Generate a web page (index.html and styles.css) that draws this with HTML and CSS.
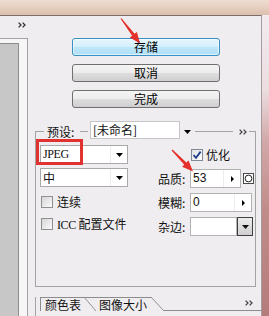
FILE: index.html
```html
<!DOCTYPE html>
<html lang="zh">
<head>
<meta charset="utf-8">
<title>存储为 Web 所用格式</title>
<link rel="stylesheet" href="styles.css">
</head>
<body>
<div class="page">
  <div class="topband"></div>
  <div class="stage">
    <div class="dialog">
      <div class="side">
        <svg class="chev" width="8" height="6" viewBox="0 0 8 6"><path d="M0.6 0.6 L3 3 L0.6 5.4 M4.6 0.6 L7 3 L4.6 5.4" fill="none" stroke="#333" stroke-width="1.3"/></svg>
        <div class="preview"><div class="preview-inner"></div></div>
      </div>
      <div class="main">
        <div class="buttons">
          <button class="btn btn-focus">存储</button>
          <button class="btn">取消</button>
          <button class="btn">完成</button>
        </div>
        <div class="group">
          <div class="legend">
            <span class="seg seg1"></span>
            <span class="legend-label">预设:</span>
            <span class="seg seg2"></span>
            <div class="preset">[未命名]</div>
            <svg class="tri preset-arrow" width="7" height="4" viewBox="0 0 7 4"><polygon points="0,0 7,0 3.5,4" fill="#000"/></svg>
            <span class="seg seg3"></span>
            <svg class="chev" width="8" height="6" viewBox="0 0 8 6"><path d="M0.6 0.6 L3 3 L0.6 5.4 M4.6 0.6 L7 3 L4.6 5.4" fill="none" stroke="#444" stroke-width="1.3"/></svg>
            <span class="seg seg4"></span>
          </div>
          <div class="cols">
            <div class="colL">
              <div class="combo"><span class="val latin">JPEG</span><span class="combo-btn"><svg width="7" height="4" viewBox="0 0 7 4"><polygon points="0,0 7,0 3.5,4" fill="#000"/></svg></span></div>
              <div class="combo combo2"><span class="val">中</span><span class="combo-btn"><svg width="7" height="4" viewBox="0 0 7 4"><polygon points="0,0 7,0 3.5,4" fill="#000"/></svg></span></div>
              <div class="check check1"><span class="cb"></span><span>连续</span></div>
              <div class="check check2"><span class="cb"></span><span><span class="latin">ICC</span> 配置文件</span></div>
            </div>
            <div class="colR">
              <div class="opt"><span class="cb cb-on"><svg width="10" height="10" viewBox="0 0 10 10"><path d="M1.5 5 L4 7.8 L8.6 1.6" fill="none" stroke="#233c8e" stroke-width="1.8"/></svg></span><span>优化</span></div>
              <div class="row">
                <span class="lbl">品质:</span>
                <div class="field f-quality"><span class="num">53</span><span class="step"><svg width="3" height="6" viewBox="0 0 3 6"><polygon points="0,0 3,3 0,6" fill="#000"/></svg></span></div>
                <span class="circ"><svg width="9" height="9" viewBox="0 0 9 9"><circle cx="4.5" cy="4.5" r="3.4" fill="none" stroke="#222" stroke-width="1"/></svg></span>
              </div>
              <div class="row">
                <span class="lbl">模糊:</span>
                <div class="field f-blur"><span class="num">0</span><span class="step"><svg width="3" height="6" viewBox="0 0 3 6"><polygon points="0,0 3,3 0,6" fill="#000"/></svg></span></div>
              </div>
              <div class="row">
                <span class="lbl">杂边:</span>
                <div class="field f-matte"></div>
                <span class="drop"><svg width="7" height="4" viewBox="0 0 7 4"><polygon points="0,0 7,0 3.5,4" fill="#111"/></svg></span>
              </div>
            </div>
          </div>
        </div>
        <div class="tabs">
          <div class="tab tab-active">颜色表</div>
          <div class="tab tab-next">图像大小</div>
          <div class="tab-rest"><svg class="chev" width="8" height="6" viewBox="0 0 8 6"><path d="M0.6 0.6 L3 3 L0.6 5.4 M4.6 0.6 L7 3 L4.6 5.4" fill="none" stroke="#444" stroke-width="1.3"/></svg></div>
        </div>
      </div>
    </div>
    <div class="bgstrip"></div>
  </div>
  <div class="mark"></div>
  <svg class="arrows" width="269" height="316" viewBox="0 0 269 316">
    <polygon points="120.52,18.86 132.15,35.65 129.76,37.46 140,43.5 136.92,32.02 134.53,33.83 121.48,18.14" fill="#e3302c"/>
    <polygon points="171.57,150.42 184.24,164.68 182.09,166.78 193,171.5 188.53,160.48 186.38,162.58 172.43,149.58" fill="#e3302c"/>
  </svg>
</div>
</body>
</html>
```
FILE: styles.css
```css
* { box-sizing: border-box; margin: 0; padding: 0; }
html, body { width: 269px; height: 316px; overflow: hidden; }
body {
  font-family: "Noto Sans CJK SC", "Noto Sans", sans-serif;
  font-size: 12px;
  color: #111;
  background: #efedef;
}
.page { position: relative; width: 269px; height: 316px; overflow: hidden; display: flex; flex-direction: column; }
.topband { height: 15px; flex: none; background: linear-gradient(to bottom, #efddd2, #dcc0ae); }
.stage { flex: 1; display: flex; min-height: 0; }
.dialog {
  width: 262px; flex: none; display: flex;
  background: #efedef;
  border-top: 1px solid #7e6e6a;
  border-right: 1px solid #a69ca0;
}
.bgstrip { flex: 1; background: linear-gradient(to bottom, #f2ebee 0%, #ebdde0 25%, #d2a8a8 42%, #c08c8a 65%, #b47c7a 100%); }

.side { width: 28px; flex: none; display: flex; flex-direction: column; }
.side .chev { margin: 6px 0 0 18px; flex: none; }
.preview {
  margin-top: 10px; flex: 1; display: flex; flex-direction: column;
  border-top: 1px solid #a2a2a2; border-right: 1px solid #a2a2a2;
  background: #f6f6f6; padding-top: 4px;
}
.preview-inner { width: 19px; flex: 1; border-top: 1px solid #8d8d8d; border-right: 1px solid #8d8d8d; background: #c7c7c7; }

.main { flex: 1; min-width: 0; display: flex; flex-direction: column; padding-top: 22px; }
.buttons { margin-left: 44px; width: 148px; display: flex; flex-direction: column; gap: 8px; }
.btn {
  height: 18px; font: inherit; font-size: 12px; line-height: 16px; color: #000;
  border: 1px solid #707070; border-radius: 3px;
  background: linear-gradient(to bottom, #f4f4f4 0%, #ececec 50%, #dedede 51%, #cfcfcf 100%);
}
.btn-focus {
  border-color: #3a8fc4;
  background: linear-gradient(to bottom, #e6f6fd 0%, #d3effc 50%, #bfe7fa 51%, #aedff6 100%);
  box-shadow: inset 0 0 0 1px rgba(255,255,255,0.55);
}

.group {
  margin-top: 23px; margin-left: 7px; width: 221px; height: 156px;
  border: 1px solid #a3a3a3; border-top: none;
  display: flex; flex-direction: column;
}
.legend { margin-top: -9px; height: 19px; display: flex; align-items: center; }
.seg { height: 1px; background: #a3a3a3; flex: none; }
.seg1 { width: 8px; }
.legend-label { margin-left: 3px; width: 31px; flex: none; line-height: 18px; }
.seg2 { margin-left: 2px; width: 8px; }
.preset {
  margin-left: 2px; width: 90px; height: 18px; flex: none; align-self: flex-start; margin-top: -1px;
  background: #fff; border: 1px solid #c6c6c6; padding-left: 2px; line-height: 16px;
}
.preset-arrow { margin-left: 4px; flex: none; }
.seg3 { margin-left: 4px; width: 38px; }
.legend .chev { margin-left: 6px; flex: none; }
.seg4 { margin-left: 2px; flex: 1; }

.cols { margin-top: 4px; display: flex; }
.colL { margin-left: 4px; width: 88px; flex: none; display: flex; flex-direction: column; }
.colR { margin-left: 30px; flex: 1; display: flex; flex-direction: column; }

.latin { font-family: "Liberation Serif", serif; font-size: 12px; letter-spacing: -0.4px; }
.combo { height: 19px; display: flex; background: #fff; border: 1px solid #a9a9a9; }
.combo2 { margin-top: 4px; }
.combo .val { flex: 1; padding-left: 2px; line-height: 17px; }
.combo-btn { width: 17px; flex: none; display: flex; align-items: center; justify-content: center; border-left: 1px solid #ececec; }

.check { height: 19px; display: flex; align-items: center; }
.check1 { margin-top: 5px; }
.check2 { margin-top: 3px; }
.cb {
  width: 12px; height: 12px; flex: none; margin-left: 1px; margin-right: 4px;
  border: 1px solid #8f8f8f;
  background: linear-gradient(135deg, #d6d6d6, #fbfbfb);
  display: flex; align-items: center; justify-content: center;
}

.opt { height: 19px; display: flex; align-items: center; padding-left: 32px; }
.opt .cb { margin-right: 3px; border-color: #7f8a9a; background: linear-gradient(135deg, #e2e2e2, #fdfdfd); }
.row { height: 19px; margin-top: 5px; display: flex; align-items: center; }
.lbl { width: 32px; flex: none; line-height: 19px; }
.field { height: 19px; flex: none; background: #fff; border: 1px solid #b3b3b3; display: flex; align-items: center; }
.num { flex: 1; padding-left: 2px; font-family: "Liberation Sans", sans-serif; font-size: 12px; line-height: 17px; }
.step { width: 17px; height: 17px; flex: none; display: flex; align-items: center; justify-content: center; border-left: 1px solid #ededed; }
.f-quality { width: 51px; }
.f-blur { width: 62px; }
.f-matte { width: 47px; }
.circ {
  margin-left: 2px; width: 11px; height: 11px; flex: none;
  border: 1px solid #4a4a4a; background: #fff;
  display: flex; align-items: center; justify-content: center;
}
.drop {
  width: 16px; height: 19px; flex: none;
  border: 1px solid #3f3f3f;
  background: linear-gradient(to bottom, #ececec, #cfcfcf);
  display: flex; align-items: center; justify-content: center;
}

.tabs { margin-top: 10px; margin-left: 7px; flex: 1; border-left: 1px solid #a3a3a3; display: flex; align-items: flex-start; }
.tab { position: relative; height: 14px; border-top: 1px solid #8c8c8c; line-height: 13px; flex: none; }
.tab::after {
  content: ""; position: absolute; left: 100%; top: -1px; width: 12px; height: 14px;
  background: linear-gradient(to top right, transparent calc(50% - 0.7px), #8c8c8c 50%, transparent calc(50% + 0.7px));
}
.tab-active { margin-left: 4px; border-left: 1px solid #8c8c8c; padding: 0 3px 0 4px; z-index: 2; }
.tab-next { padding: 0 4px 0 15px; z-index: 1; }
.tab-next::after { width: 13px; }
.tab-rest { margin-left: 13px; flex: 1; height: 14px; border-bottom: 1px solid #8c8c8c; display: flex; justify-content: flex-end; }
.tab-rest .chev { margin: 3px 8px 0 0; }

.mark { position: absolute; left: 36px; top: 139px; width: 47px; height: 26px; border: 3px solid #e0322f; }
.arrows { position: absolute; left: 0; top: 0; pointer-events: none; }
```
